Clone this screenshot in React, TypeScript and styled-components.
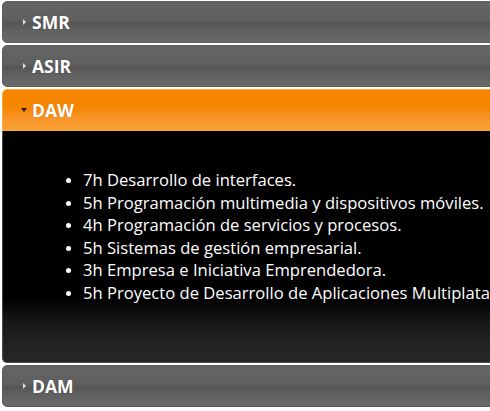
import React, { useState } from "react";
import styled, { createGlobalStyle } from "styled-components";

const Global = createGlobalStyle`
  html, body { margin: 0; padding: 0; background: #fff; overflow: hidden; }
  body { width: 490px; height: 411px; }
`;

const Accordion = styled.div`
  width: 530px;
  padding: 1px 0 0 2px;
  display: flex;
  flex-direction: column;
  gap: 2px;
  font-family: "Open Sans", "Noto Sans", sans-serif;
`;

const Header = styled.div<{ $active?: boolean }>`
  height: 42px;
  box-sizing: border-box;
  display: flex;
  align-items: center;
  gap: 4px;
  padding-left: 17px;
  border: 1px solid ${(p) => (p.$active ? "#f7a640" : "#5d5d5d")};
  border-radius: ${(p) => (p.$active ? "5px 5px 0 0" : "5px")};
  background: ${(p) =>
    p.$active
      ? "linear-gradient(#f68500 0%, #f68600 45%, #f7952a 70%, #f8a033 100%)"
      : "linear-gradient(#656565 0%, #5f5f5f 48%, #555555 52%, #626262 75%, #6a6a6a 100%)"};
  color: #fff;
  font-weight: 700;
  font-size: 17.5px;
  text-shadow: 0 0 1px rgba(0, 0, 0, 0.3);
  cursor: pointer;
`;

const ArrowBox = styled.span`
  width: 8px;
  display: flex;
  justify-content: center;
  align-items: center;
`;

const Arrow = styled.span<{ $open?: boolean }>`
  width: 0;
  height: 0;
  ${(p) =>
    p.$open
      ? `border-left: 3px solid transparent; border-right: 3px solid transparent; border-top: 4px solid #222;`
      : `border-top: 3px solid transparent; border-bottom: 3px solid transparent; border-left: 3px solid #ddd;`}
`;

const Content = styled.div`
  height: 232px;
  box-sizing: border-box;
  margin-top: -2px;
  border: 1px solid #4a4a4a;
  border-top: none;
  border-radius: 0 0 5px 5px;
  background: linear-gradient(#000 0%, #000 72%, #161616 82%, #222 92%, #262626 100%);
  padding: 38px 0 0 0;
`;

const List = styled.ul`
  margin: 0;
  padding-left: 80px;
  color: #fff;
  font-size: 16.6px;
  line-height: 22.5px;
  white-space: nowrap;
  li::marker { font-size: 14px; }
`;

const sections = [
  { id: "SMR", items: [] as string[] },
  { id: "ASIR", items: [] as string[] },
  {
    id: "DAW",
    items: [
      "7h Desarrollo de interfaces.",
      "5h Programación multimedia y dispositivos móviles.",
      "4h Programación de servicios y procesos.",
      "5h Sistemas de gestión empresarial.",
      "3h Empresa e Iniciativa Emprendedora.",
      "5h Proyecto de Desarrollo de Aplicaciones Multiplataforma.",
    ],
  },
  { id: "DAM", items: [] as string[] },
];

export default function App() {
  const [open, setOpen] = useState("DAW");
  return (
    <>
      <Global />
      <Accordion>
        {sections.map((s) => (
          <React.Fragment key={s.id}>
            <Header $active={open === s.id} onClick={() => setOpen(s.id)}>
              <ArrowBox>
                <Arrow $open={open === s.id} />
              </ArrowBox>
              {s.id}
            </Header>
            {open === s.id && (
              <Content>
                <List>
                  {s.items.map((it) => (
                    <li key={it}>{it}</li>
                  ))}
                </List>
              </Content>
            )}
          </React.Fragment>
        ))}
      </Accordion>
    </>
  );
}
